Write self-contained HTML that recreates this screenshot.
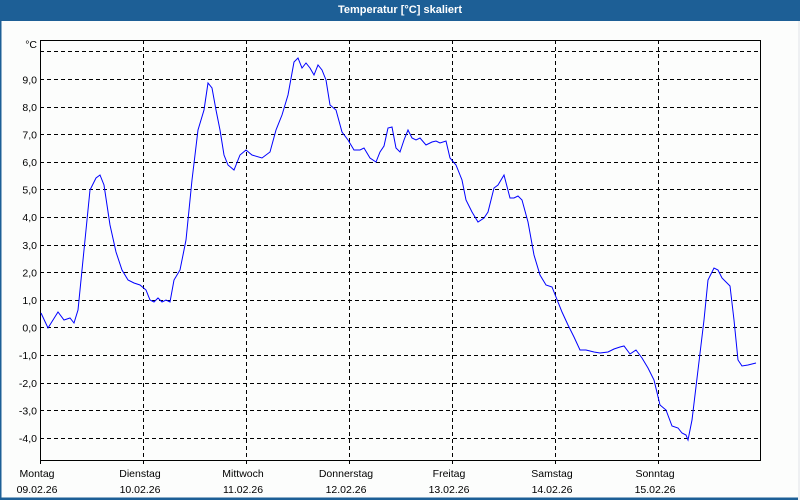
<!DOCTYPE html>
<html><head><meta charset="utf-8"><style>
html,body{margin:0;padding:0;width:800px;height:500px;overflow:hidden;background:#fff;font-family:"Liberation Sans",sans-serif;}
</style></head><body>
<svg width="800" height="500" xmlns="http://www.w3.org/2000/svg" style="display:block">
<rect x="0" y="0" width="800" height="500" fill="#fcfdfc"/>
<rect x="0" y="0" width="800" height="21" fill="#1d5f96"/>
<rect x="0" y="21" width="1.5" height="479" fill="#1d5f96"/>
<rect x="0" y="497.5" width="800" height="2.5" fill="#1d5f96"/>
<rect x="798" y="21" width="2" height="479" fill="#eef0f2"/>
<text x="400" y="13" text-anchor="middle" font-size="11" font-weight="bold" fill="#fff" font-family="Liberation Sans, sans-serif">Temperatur [°C] skaliert</text>
<g stroke="#000" stroke-width="1" stroke-dasharray="4,3" fill="none">
<line x1="40" y1="51.5" x2="760" y2="51.5"/>
<line x1="40" y1="79.5" x2="760" y2="79.5"/>
<line x1="40" y1="107.5" x2="760" y2="107.5"/>
<line x1="40" y1="134.5" x2="760" y2="134.5"/>
<line x1="40" y1="162.5" x2="760" y2="162.5"/>
<line x1="40" y1="189.5" x2="760" y2="189.5"/>
<line x1="40" y1="217.5" x2="760" y2="217.5"/>
<line x1="40" y1="245.5" x2="760" y2="245.5"/>
<line x1="40" y1="272.5" x2="760" y2="272.5"/>
<line x1="40" y1="300.5" x2="760" y2="300.5"/>
<line x1="40" y1="327.5" x2="760" y2="327.5"/>
<line x1="40" y1="355.5" x2="760" y2="355.5"/>
<line x1="40" y1="383.5" x2="760" y2="383.5"/>
<line x1="40" y1="410.5" x2="760" y2="410.5"/>
<line x1="40" y1="438.5" x2="760" y2="438.5"/>
<line x1="143.5" y1="40" x2="143.5" y2="464"/>
<line x1="246.5" y1="40" x2="246.5" y2="464"/>
<line x1="349.5" y1="40" x2="349.5" y2="464"/>
<line x1="452.5" y1="40" x2="452.5" y2="464"/>
<line x1="555.5" y1="40" x2="555.5" y2="464"/>
<line x1="658.5" y1="40" x2="658.5" y2="464"/>
</g>
<rect x="40.5" y="40.5" width="720" height="420" fill="none" stroke="#000" stroke-width="1"/>
<line x1="40.5" y1="460" x2="40.5" y2="464" stroke="#000"/>
<g font-size="10.5" fill="#000" text-anchor="end" font-family="Liberation Sans, sans-serif">
<text x="37" y="48">°C</text>
<text x="37" y="83.5">9,0</text>
<text x="37" y="111">8,0</text>
<text x="37" y="138.5">7,0</text>
<text x="37" y="166">6,0</text>
<text x="37" y="193.5">5,0</text>
<text x="37" y="221">4,0</text>
<text x="37" y="249">3,0</text>
<text x="37" y="276.5">2,0</text>
<text x="37" y="304">1,0</text>
<text x="37" y="331.5">0,0</text>
<text x="37" y="359">-1,0</text>
<text x="37" y="387">-2,0</text>
<text x="37" y="414.5">-3,0</text>
<text x="37" y="442">-4,0</text>
</g>
<g font-size="10.5" fill="#000" text-anchor="middle" font-family="Liberation Sans, sans-serif">
<text x="37" y="477">Montag</text><text x="37" y="493">09.02.26</text>
<text x="140" y="477">Dienstag</text><text x="140" y="493">10.02.26</text>
<text x="243" y="477">Mittwoch</text><text x="243" y="493">11.02.26</text>
<text x="346" y="477">Donnerstag</text><text x="346" y="493">12.02.26</text>
<text x="449" y="477">Freitag</text><text x="449" y="493">13.02.26</text>
<text x="552" y="477">Samstag</text><text x="552" y="493">14.02.26</text>
<text x="655" y="477">Sonntag</text><text x="655" y="493">15.02.26</text>
</g>
<polyline fill="none" stroke="#0000ff" stroke-width="1" points="41,313 48,328 58,312 64,320 70,318 74,323 78,310 84,250 90,190 96,178 100,175 104,185 110,225 116,252 122,270 128,280 134,283 140,285 146,290 150,300 154,302 158,298 162,302 166,300 170,302 174,280 180,270 186,240 192,180 198,130 204,110 208,83 212,88 216,110 220,130 224,155 228,165 234,170 240,155 246,150 252,155 262,158 270,152 276,130 282,115 288,95 294,62 298,58 302,68 306,63 310,68 314,75 318,65 322,70 326,80 330,105 336,110 342,132 348,140 354,150 360,150 364,148 370,158 376,162 380,152 384,146 388,128 392,127 396,148 400,152 404,140 408,130 412,138 416,140 420,138 426,145 432,142 436,141 440,143 446,141 450,158 456,165 462,180 466,200 472,212 478,222 484,218 488,212 494,188 498,185 504,175 510,198 514,198 518,196 522,200 528,222 534,255 540,275 546,285 552,287 556,297 562,312 568,325 574,337 580,350 586,350 594,352 600,353 608,352 614,349 620,347 624,346 630,354 636,350 642,358 648,368 654,380 660,405 666,410 672,426 678,428 682,433 686,435 688,440 692,420 698,370 704,320 708,280 714,268 718,270 722,278 730,286 734,320 738,360 742,366 748,365 756,363"/>
</svg>
</body></html>
